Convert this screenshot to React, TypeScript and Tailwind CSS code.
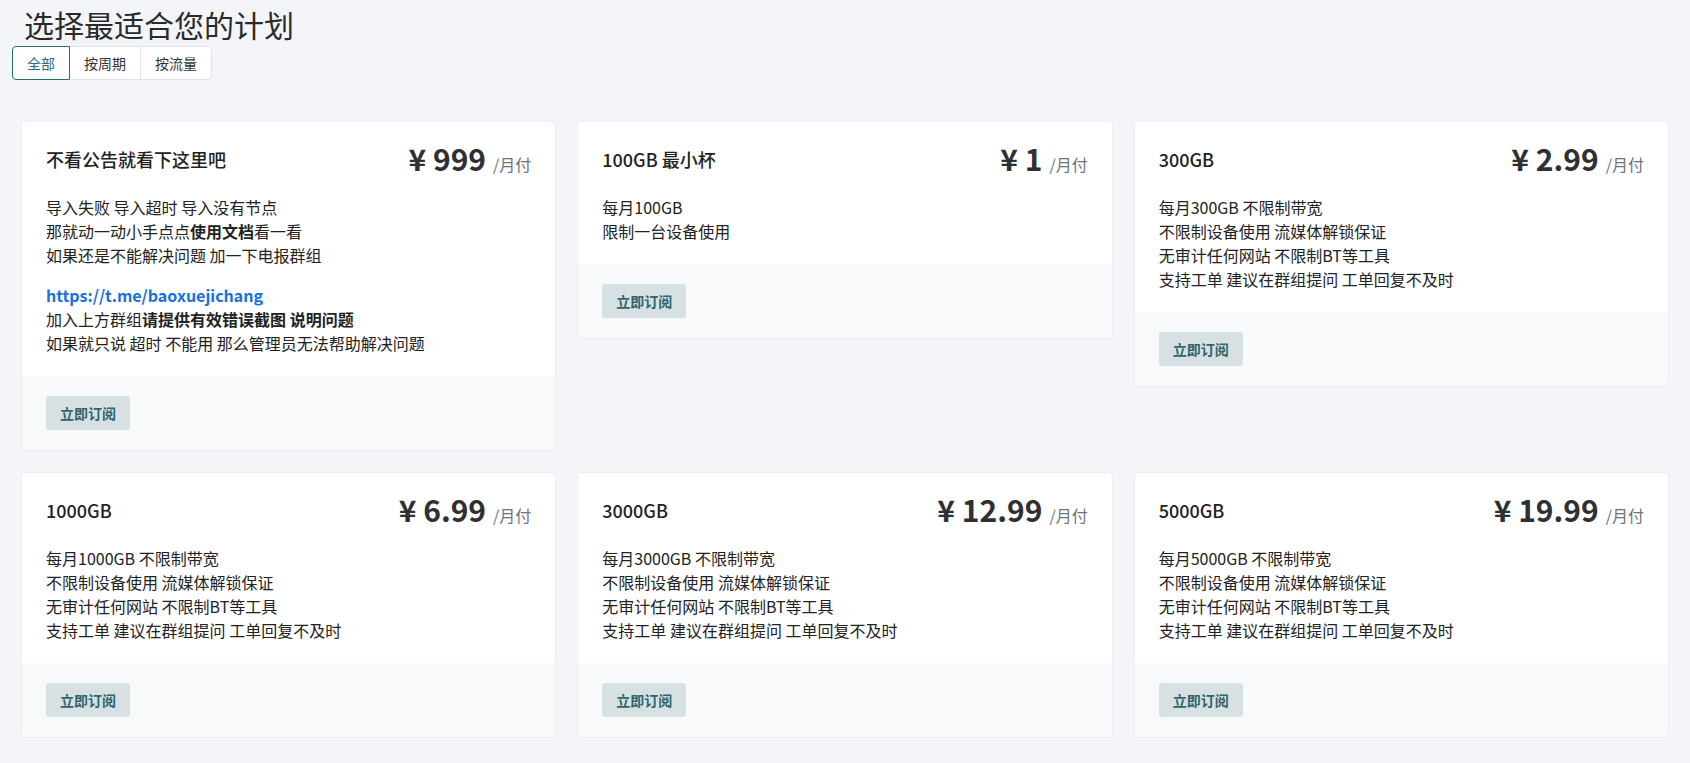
import type { ReactNode } from 'react';

type Plan = {
  title: string;
  price: string;
  body: ReactNode;
};

const featureLines = (gb: string) => [
  `每月${gb} 不限制带宽`,
  '不限制设备使用 流媒体解锁保证',
  '无审计任何网站 不限制BT等工具',
  '支持工单 建议在群组提问 工单回复不及时',
];

const Lines = ({ lines }: { lines: string[] }) => (
  <p>
    {lines.map((l) => (
      <span key={l} className="block">
        {l}
      </span>
    ))}
  </p>
);

const plans: Plan[] = [
  {
    title: '不看公告就看下这里吧',
    price: '999',
    body: (
      <>
        <p className="mb-4">
          导入失败 导入超时 导入没有节点
          <br />
          那就动一动小手点点<b className="font-bold">使用文档</b>看一看
          <br />
          如果还是不能解决问题 加一下电报群组
        </p>
        <p>
          <a href="#" className="font-bold text-[#1a6fe0]">
            https://t.me/baoxuejichang
          </a>
          <br />
          加入上方群组<b className="font-bold">请提供有效错误截图 说明问题</b>
          <br />
          如果就只说 超时 不能用 那么管理员无法帮助解决问题
        </p>
      </>
    ),
  },
  {
    title: '100GB 最小杯',
    price: '1',
    body: <Lines lines={['每月100GB', '限制一台设备使用']} />,
  },
  { title: '300GB', price: '2.99', body: <Lines lines={featureLines('300GB')} /> },
  { title: '1000GB', price: '6.99', body: <Lines lines={featureLines('1000GB')} /> },
  { title: '3000GB', price: '12.99', body: <Lines lines={featureLines('3000GB')} /> },
  { title: '5000GB', price: '19.99', body: <Lines lines={featureLines('5000GB')} /> },
];

const tabs = ['全部', '按周期', '按流量'];

function PlanCard({ plan }: { plan: Plan }) {
  return (
    <div className="bg-white border border-[#eceef3] rounded-[4px] overflow-hidden">
      <div className="px-6 pt-[22px] pb-[21px]">
        <div className="flex items-center justify-between h-[30px] mb-[21px]">
          <h3 className="text-[18px] font-medium text-[#222]">{plan.title}</h3>
          <div className="flex items-baseline whitespace-nowrap">
            <span className="text-[30px] leading-[30px] font-bold text-[#2e3033]">
              ¥ {plan.price}
            </span>
            <span className="ml-[7px] text-[16px] text-[#6c757d]">/月付</span>
          </div>
        </div>
        <div className="text-[16px] leading-6 text-[#222]">{plan.body}</div>
      </div>
      <div className="bg-[#f8f9fb] px-6 py-5">
        <button className="h-[34px] px-[14px] rounded-[3px] bg-[#d7e1e3] text-[14px] font-semibold text-[#2f656b]">
          立即订阅
        </button>
      </div>
    </div>
  );
}

export default function App() {
  return (
    <div
      className="min-h-screen bg-[#f4f5f9] pb-6"
      style={{ fontFamily: '"Noto Sans CJK SC", "Noto Sans", sans-serif' }}
    >
      <h1 className="pt-[6px] pl-[24px] text-[30px] leading-[36px] font-normal text-[#2a2a2a]">
        选择最适合您的计划
      </h1>
      <div className="ml-[12px] mt-[4px] flex">
        {tabs.map((t, i) => (
          <button
            key={t}
            className={`h-[34px] px-[14px] text-[14px] bg-white border ${
              i === 0
                ? 'rounded-l-[4px] border-[#2c6a6f] text-[#2f676c] relative z-10'
                : 'border-[#dfe2e8] text-[#333] -ml-px'
            } ${i === tabs.length - 1 ? 'rounded-r-[4px]' : ''}`}
          >
            {t}
          </button>
        ))}
      </div>
      <div className="mt-[41px] px-[21px] grid grid-cols-3 gap-x-[21px] gap-y-[21px] items-start">
        {plans.map((p) => (
          <PlanCard key={p.title} plan={p} />
        ))}
      </div>
    </div>
  );
}
